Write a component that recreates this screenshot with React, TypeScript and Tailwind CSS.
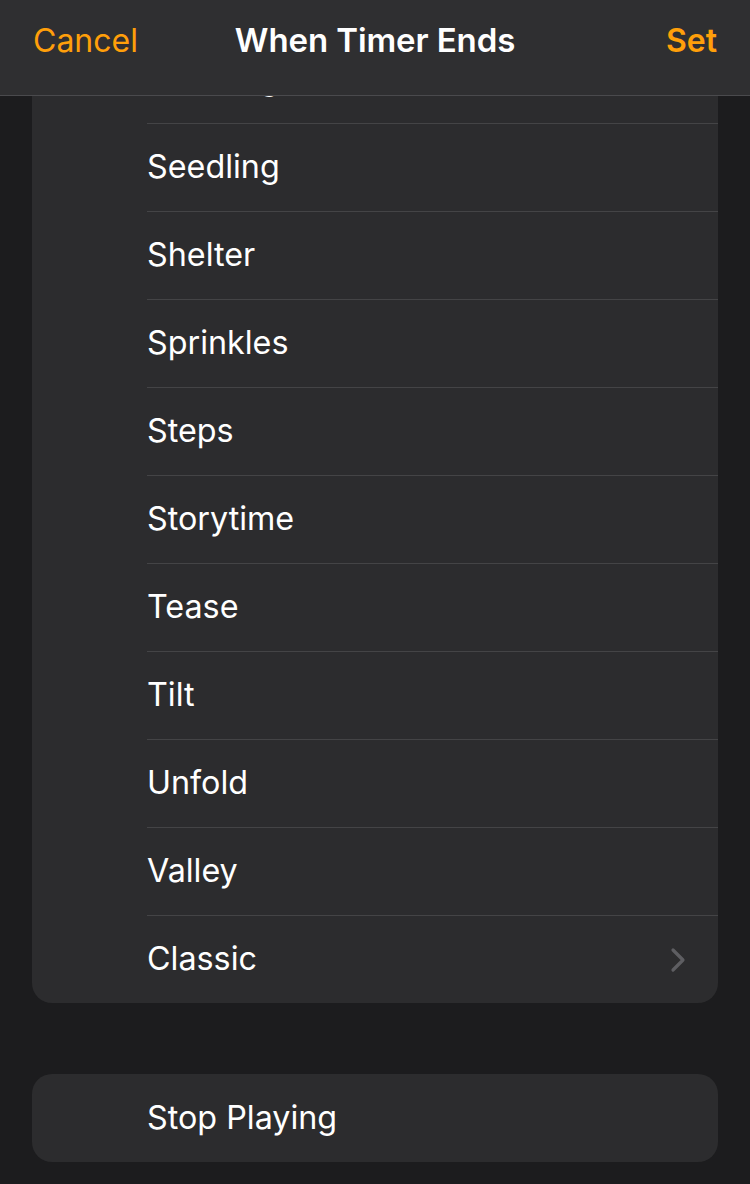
import React from 'react';

const tones = ['Scavenger', 'Seedling', 'Shelter', 'Sprinkles', 'Steps', 'Storytime', 'Tease', 'Tilt', 'Unfold', 'Valley'];

export default function App() {
  return (
    <div className="relative w-[750px] h-[1184px] overflow-hidden bg-[#1c1c1e] font-[Inter,'Noto_Sans',sans-serif]">
      {/* Nav bar */}
      <div className="absolute top-0 left-0 right-0 z-10 h-[96px] bg-[#2f2f31] border-b border-[#4a4a4d] flex items-center justify-between px-[33px] pb-[14px]">
        <span className="text-[32px] text-[#ff9f0a]">Cancel</span>
        <div className="absolute inset-0 pb-[14px] flex items-center justify-center pointer-events-none">
          <span className="text-[33px] font-semibold text-white tracking-[-0.1px]">When Timer Ends</span>
        </div>
        <span className="text-[32px] font-semibold text-[#ff9f0a]">Set</span>
      </div>

      <div className="pt-[36px] px-[32px] flex flex-col">
        {/* Sound list */}
        <div className="bg-[#2c2c2e] rounded-[20px] overflow-hidden">
          {tones.map((t) => (
            <div key={t} className="h-[88px] pl-[115px] flex">
              <div className="flex-1 flex items-center border-b border-[#444446]">
                <span className="text-[32.3px] text-white">{t}</span>
              </div>
            </div>
          ))}
          <div className="h-[87px] pl-[115px] pr-[32px] flex items-center justify-between">
            <span className="text-[32.3px] text-white">Classic</span>
            <svg width="16" height="26" viewBox="0 0 16 26" fill="none">
              <path d="M3 3l10 10-10 10" stroke="#5e5e62" strokeWidth="3.2" strokeLinecap="round" strokeLinejoin="round" />
            </svg>
          </div>
        </div>

        {/* Stop playing */}
        <div className="mt-[71px] h-[88px] bg-[#2c2c2e] rounded-[20px] pl-[115px] flex items-center">
          <span className="text-[32.3px] text-white">Stop Playing</span>
        </div>
      </div>
    </div>
  );
}
